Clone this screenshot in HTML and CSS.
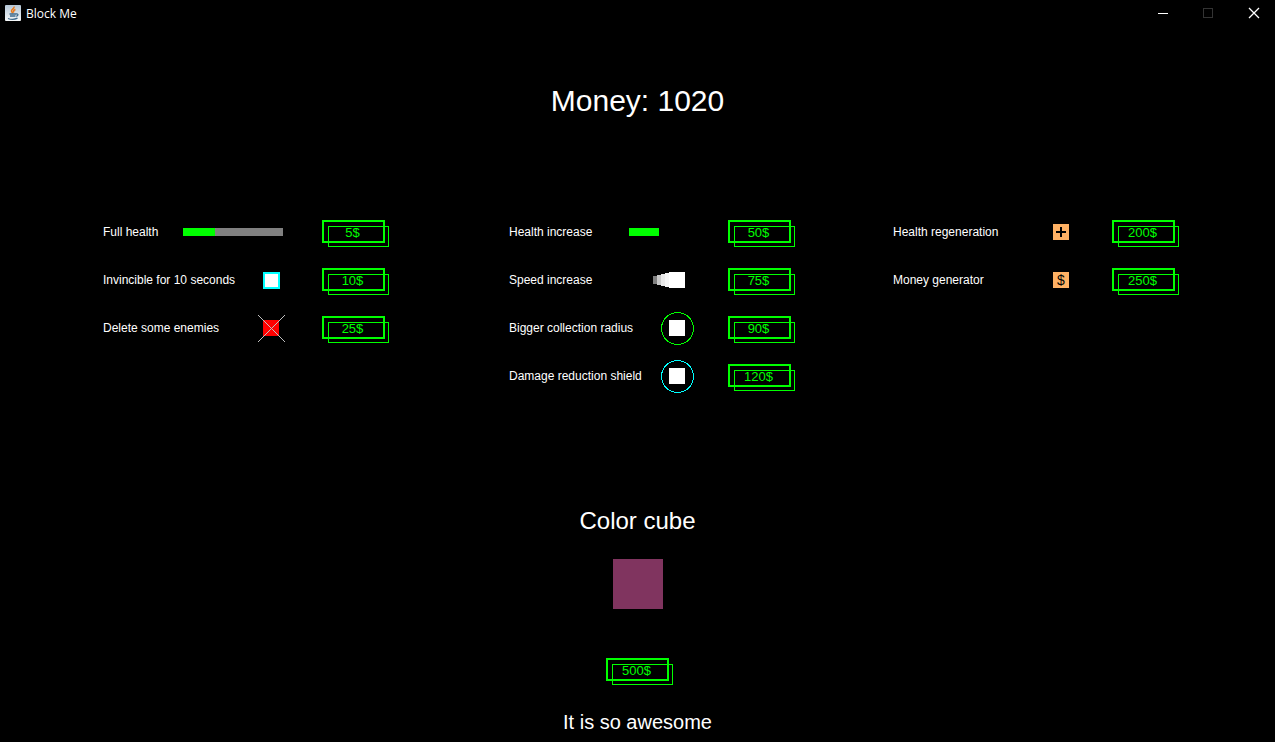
FILE: index.html
```html
<!DOCTYPE html>
<html lang="en">
<head>
    <meta charset="UTF-8">
    <meta name="viewport" content="width=device-width, initial-scale=1.0">
    <title>Block Me</title>
    <link rel="stylesheet" href="styles.css">
</head>
<body>
    <header class="titlebar">
        <svg class="app-icon" width="16" height="16" viewBox="0 0 16 16">
            <defs>
                <linearGradient id="tile" x1="0" y1="0" x2="0" y2="1">
                    <stop offset="0" stop-color="#b4c6d6"/>
                    <stop offset="1" stop-color="#f7f9fa"/>
                </linearGradient>
            </defs>
            <rect width="16" height="16" rx="1" fill="url(#tile)"/>
            <path d="M9 1.500c1 2-3 3-2.500 4.500.2 1 1 1.300 1 2.500M10.500 4.500C8.500 5.500 8 6 9 7.500" fill="none" stroke="#e8791c" stroke-width="1.500"/>
            <path d="M4.500 9h6.500M5 11h5.500M3 13.500c3 1.200 7 1 9.500-.3M11 9c2.500-.6 2.500 1.500.3 2.300" fill="none" stroke="#3f6a8c" stroke-width="1.300"/>
        </svg>
        <span class="window-title">Block Me</span>
        <div class="window-buttons">
            <button type="button" aria-label="Minimize">
                <svg width="46" height="26" shape-rendering="crispEdges"><path d="M21 13.500h10" stroke="#fff"/></svg>
            </button>
            <button type="button" aria-label="Maximize" disabled>
                <svg width="46" height="26" shape-rendering="crispEdges"><path d="M20.500 8.500h9v9h-9z" fill="none" stroke="#333"/></svg>
            </button>
            <button type="button" aria-label="Close">
                <svg width="46" height="26"><path d="M20 8l10 10M30 8l-10 10" stroke="#fff" stroke-width="1.300"/></svg>
            </button>
        </div>
    </header>

    <main>
        <h1 class="money">Money: 1020</h1>

        <div class="shop">
            <ul class="items">
                <li class="item">
                    <span class="name" id="full-health">Full health</span>
                    <svg class="icon" width="106" height="36" shape-rendering="crispEdges">
                        <rect y="14" width="100" height="8" fill="#808080"/>
                        <rect y="14" width="32" height="8" fill="#0f0"/>
                    </svg>
                    <button type="button" class="price" aria-describedby="full-health">5$</button>
                </li>
                <li class="item">
                    <span class="name" id="invincible">Invincible for 10 seconds</span>
                    <svg class="icon" width="36" height="36" shape-rendering="crispEdges">
                        <rect x="10" y="10" width="17" height="17" fill="#0ff"/>
                        <rect x="12" y="12" width="13" height="13" fill="#fff"/>
                    </svg>
                    <button type="button" class="price" aria-describedby="invincible">10$</button>
                </li>
                <li class="item">
                    <span class="name" id="delete">Delete some enemies</span>
                    <svg class="icon" width="36" height="36" shape-rendering="crispEdges">
                        <rect x="10" y="10" width="16" height="16" fill="#f00"/>
                        <path d="M5 5l27 27M32 5L5 32" stroke="#c0c0c0"/>
                    </svg>
                    <button type="button" class="price" aria-describedby="delete">25$</button>
                </li>
            </ul>

            <ul class="items">
                <li class="item">
                    <span class="name" id="health-increase">Health increase</span>
                    <svg class="icon" width="66" height="36" shape-rendering="crispEdges">
                        <rect y="14" width="30" height="8" fill="#0f0"/>
                    </svg>
                    <button type="button" class="price" aria-describedby="health-increase">50$</button>
                </li>
                <li class="item">
                    <span class="name" id="speed">Speed increase</span>
                    <svg class="icon" width="36" height="36" shape-rendering="crispEdges">
                        <rect x="-6" y="14" width="4" height="8" fill="#808080"/>
                        <rect x="-2" y="13" width="4" height="10" fill="#c8c8c8"/>
                        <rect x="2" y="12" width="4" height="12" fill="#e8e8e8"/>
                        <rect x="6" y="11" width="4" height="14" fill="#f5f5f5"/>
                        <rect x="10" y="10" width="16" height="16" fill="#fff"/>
                    </svg>
                    <button type="button" class="price" aria-describedby="speed">75$</button>
                </li>
                <li class="item">
                    <span class="name" id="radius">Bigger collection radius</span>
                    <svg class="icon" width="36" height="36" shape-rendering="crispEdges">
                        <circle cx="18.500" cy="18.500" r="16" fill="none" stroke="#0f0"/>
                        <rect x="10" y="10" width="16" height="16" fill="#fff"/>
                    </svg>
                    <button type="button" class="price" aria-describedby="radius">90$</button>
                </li>
                <li class="item">
                    <span class="name" id="shield">Damage reduction shield</span>
                    <svg class="icon" width="36" height="36" shape-rendering="crispEdges">
                        <circle cx="18.500" cy="18.500" r="16" fill="none" stroke="#0ff"/>
                        <rect x="10" y="10" width="16" height="16" fill="#fff"/>
                    </svg>
                    <button type="button" class="price" aria-describedby="shield">120$</button>
                </li>
            </ul>

            <ul class="items">
                <li class="item">
                    <span class="name" id="regeneration">Health regeneration</span>
                    <svg class="icon" width="36" height="36" shape-rendering="crispEdges">
                        <rect x="10" y="10" width="16" height="16" fill="#ffb164"/>
                        <path d="M13 18h10M18 13v10" stroke="#000" stroke-width="2"/>
                    </svg>
                    <button type="button" class="price" aria-describedby="regeneration">200$</button>
                </li>
                <li class="item">
                    <span class="name" id="generator">Money generator</span>
                    <svg class="icon" width="36" height="36">
                        <rect x="10" y="10" width="16" height="16" fill="#ffb164"/>
                        <text class="dollar" x="18" y="23" text-anchor="middle">$</text>
                    </svg>
                    <button type="button" class="price" aria-describedby="generator">250$</button>
                </li>
            </ul>
        </div>

        <section class="special">
            <h2 id="color-cube">Color cube</h2>
            <div class="cube"></div>
            <button type="button" class="price" aria-describedby="color-cube">500$</button>
            <p>It is so awesome</p>
        </section>
    </main>
</body>
</html>
```

FILE: styles.css
```css
body {
    margin: 0;
    background-color: #000;
    color: #fff;
    font-family: "Liberation Sans", Arial, sans-serif;
}

.titlebar {
    display: flex;
    align-items: center;
    height: 26px;
    padding-left: 5px;
}

.window-title {
    margin-left: 5px;
    font-family: "Open Sans", "Segoe UI", sans-serif;
    font-size: 12px;
}

.window-buttons {
    display: flex;
    margin-left: auto;
}

.window-buttons button {
    width: 46px;
    height: 26px;
    padding: 0;
    border: none;
    background: none;
}

.window-buttons svg {
    display: block;
}

.money {
    margin: 57px 0 89px;
    font-size: 30px;
    font-weight: normal;
    line-height: 36px;
    text-align: center;
}

.shop {
    display: grid;
    grid-template-columns: 406fr 384fr 286px;
    padding: 0 96px 0 103px;
}

.items {
    width: 286px;
    margin: 0;
    padding: 0;
    list-style: none;
}

.item {
    display: flex;
    align-items: center;
    height: 48px;
}

.name {
    flex: 1;
    font-size: 12px;
    line-height: 16px;
    white-space: nowrap;
}

.icon {
    margin-right: 33px;
    overflow: visible;
}

.dollar {
    font-size: 14px;
}

.price {
    position: relative;
    width: 63px;
    height: 23px;
    padding: 3px 2px 0 0;
    border: 2px solid #0f0;
    background: none;
    color: #0f0;
    font-family: inherit;
    font-size: 13px;
    line-height: 16px;
    text-align: center;
    cursor: pointer;
}

.item .price {
    margin: 0 4px 1px 0;
}

/* thin second frame, shifted down and right */
.price::after {
    content: "";
    position: absolute;
    top: 4px;
    left: 4px;
    width: 59px;
    height: 19px;
    border: 1px solid #0f0;
}

.price:hover {
    color: #fff;
}

.special {
    display: flex;
    flex-direction: column;
    align-items: center;
    padding-top: 107px;
}

.special h2 {
    margin: 0;
    font-size: 24px;
    font-weight: normal;
    line-height: 28px;
}

.cube {
    width: 50px;
    height: 50px;
    margin: 24px 0 49px;
    background-color: #80345f;
}

.special p {
    margin: 29px 0 0;
    font-size: 20px;
    line-height: 24px;
}
```
